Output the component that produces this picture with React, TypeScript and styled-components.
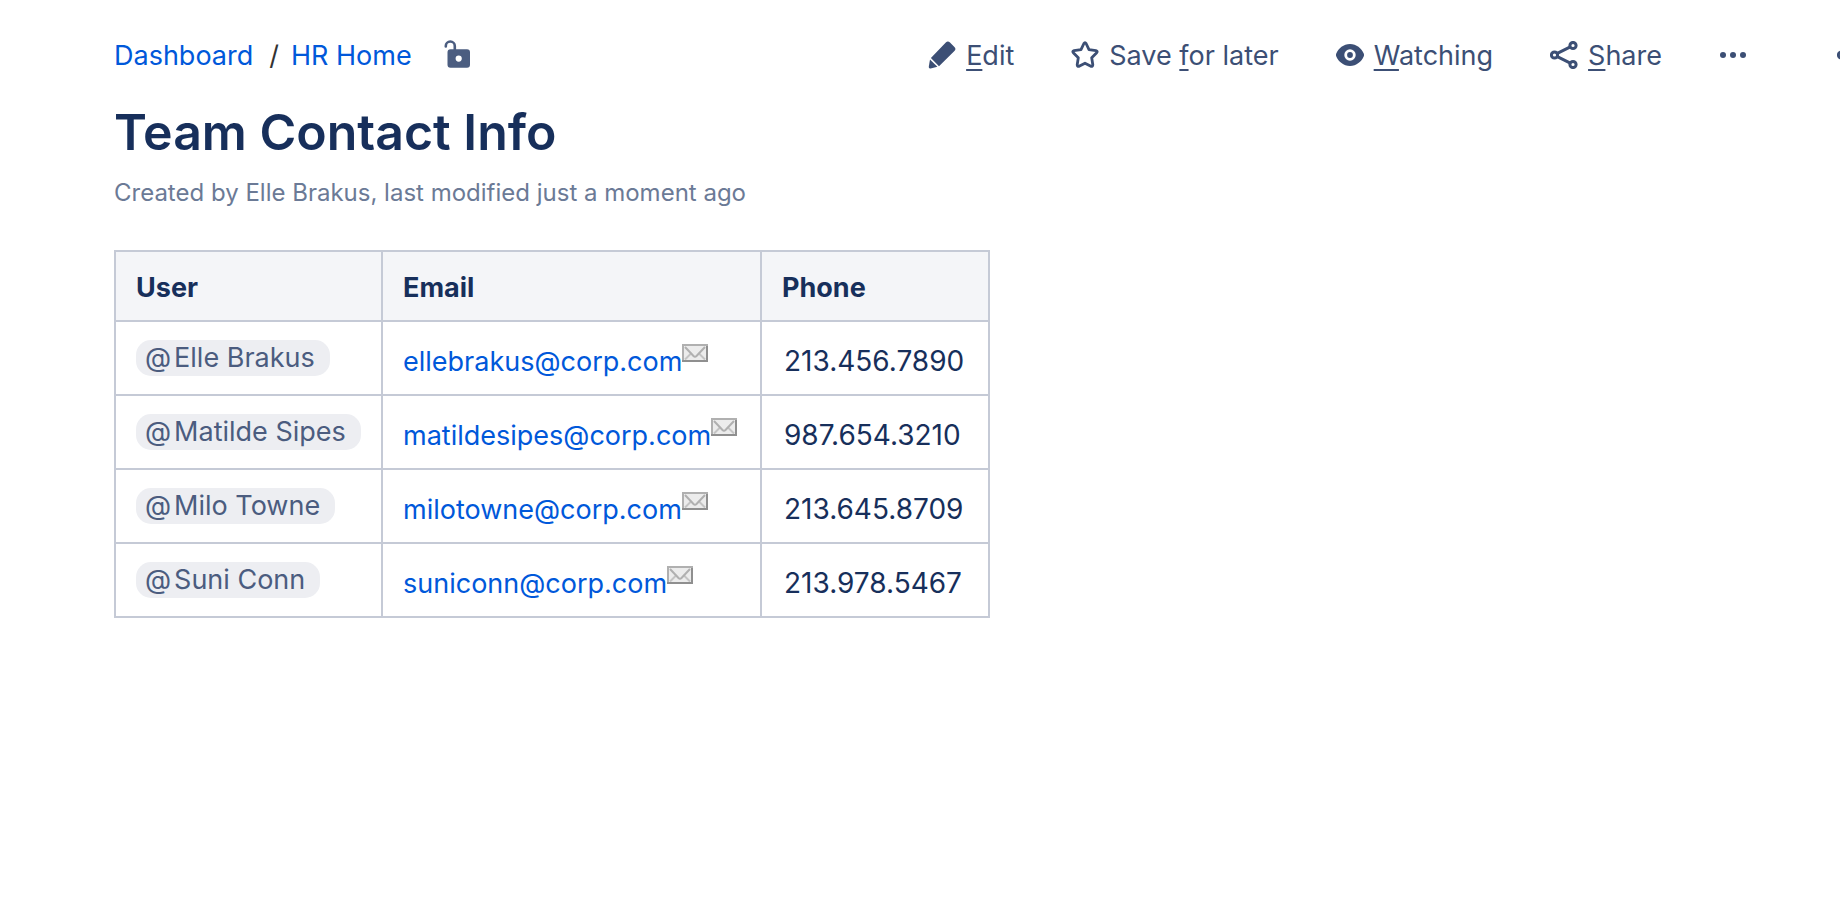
import React from "react";
import styled, { createGlobalStyle } from "styled-components";

const GlobalStyle = createGlobalStyle`
  *, *::before, *::after { box-sizing: border-box; }
  body {
    margin: 0;
    background: #ffffff;
    color: #172f5b;
    font-family: Inter, "Liberation Sans", sans-serif;
    font-size: 27px;
    line-height: 36px;
    overflow-x: hidden;
  }
`;

const Page = styled.div`
  padding-left: 114px;
  overflow: hidden;
`;

const Header = styled.header`
  display: flex;
  align-items: center;
  justify-content: space-between;
  padding-top: 38px;
`;

const Crumbs = styled.nav`
  display: flex;
  align-items: center;
  white-space: nowrap;
`;

const Separator = styled.span`
  margin: 0 12px 0 16px;
  color: #333333;
`;

const Link = styled.a`
  color: #0058da;
  text-decoration: none;
`;

const IconButton = styled.button`
  display: flex;
  align-items: center;
  border: 0;
  padding: 0;
  background: none;
  color: #4b5d80;
`;

const LockButton = styled(IconButton)`
  margin: 0 0 4px 32px;
`;

const Toolbar = styled.div`
  display: flex;
  align-items: center;
  gap: 57px;
  flex-shrink: 0;
`;

const Action = styled(IconButton)`
  gap: 10px;
  color: #3c4f75;
  font: inherit;
  white-space: nowrap;

  svg {
    margin-bottom: 2px;
  }
`;

const EdgeAction = styled(Action)`
  margin-left: 33px;
  margin-right: -25px;
`;

const Key = styled.span`
  text-decoration: underline;
  text-decoration-thickness: 2px;
  text-underline-offset: 4px;
`;

const Title = styled.h1`
  margin: 26px 0 0;
  font-size: 50px;
  line-height: 64px;
  font-weight: 600;
`;

const Meta = styled.p`
  margin: 13px 0 0;
  color: #6b7a96;
  font-size: 24px;
  line-height: 32px;
`;

const Table = styled.table`
  margin-top: 41px;
  border-collapse: collapse;
`;

const HeadCell = styled.th<{ $width: number }>`
  width: ${(p) => p.$width}px;
  height: 70px;
  padding: 4px 20px 0;
  border: 2px solid #c5cad6;
  background: #f4f5f8;
  font-weight: 700;
  text-align: left;
`;

const Cell = styled.td`
  height: 74px;
  padding: 7px 20px 0;
  border: 2px solid #c5cad6;
  white-space: nowrap;
`;

const UserCell = styled(Cell)`
  padding-top: 0;
`;

const PhoneCell = styled(Cell)`
  padding: 6px 22px 0;
  font-size: 28px;
`;

const Mention = styled.a`
  display: inline-flex;
  gap: 3px;
  padding: 0 15px 0 9px;
  border-radius: 15px;
  background: #edeef2;
  color: #4b5c7f;
  text-decoration: none;
`;

const MailIcon = styled.svg`
  vertical-align: 9px;
`;

const icon = { width: 28, height: 28, viewBox: "0 0 28 28", "aria-hidden": true } as const;

const Unlock = () => (
  <svg {...icon}>
    <path d="M1.800 6.500V6a4.500 4.500 0 0 1 9 0v5" fill="none" stroke="currentColor" strokeWidth="2.600" strokeLinecap="round" />
    <path fillRule="evenodd" fill="currentColor" d="M6.500 9.300h16.500a3 3 0 0 1 3 3V24.800a3 3 0 0 1-3 3H6.500a3 3 0 0 1-3-3V12.300a3 3 0 0 1 3-3zM14.700 15.500a3.100 3.100 0 1 0 0 6.200 3.100 3.100 0 0 0 0-6.200z" />
  </svg>
);

const Pencil = () => (
  <svg {...icon} fill="currentColor">
    <path d="M17.800 1.600a3 3 0 0 1 4.200 0l4.400 4.300a3 3 0 0 1 0 4.200L11 25.300 2.900 17z" />
    <path d="M2 18.500L9.400 25.800 2.600 27.400Q.5 27.800.8 25.600z" />
  </svg>
);

const Star = () => (
  <svg {...icon} fill="none" stroke="currentColor" strokeWidth="2.800" strokeLinejoin="round">
    <path d="M12.900 2.500q1.100-1.800 2.200 0L18 8.600l7 1q2 .5.700 2.100l-5 5 1.100 7.100q0 2-1.900 1.500L14 22.200l-5.900 3.100q-1.900.5-1.900-1.500l1.100-7.100-5-5q-1.300-1.600.7-2.100l7-1z" />
  </svg>
);

const Eye = () => (
  <svg {...icon}>
    <path fillRule="evenodd" fill="currentColor" d="M14 3C20.500 3 25.500 7.500 27.600 12.200a4 4 0 0 1 0 3.600C25.500 20.500 20.500 25 14 25S2.500 20.500.4 15.800a4 4 0 0 1 0-3.600C2.500 7.500 7.500 3 14 3zm0 5.300a5.700 5.700 0 1 0 0 11.400 5.700 5.700 0 0 0 0-11.400z" />
    <circle cx="14" cy="14" r="2.900" fill="currentColor" />
  </svg>
);

const ShareIcon = () => (
  <svg {...icon} fill="none" stroke="currentColor" strokeWidth="3">
    <circle cx="4.500" cy="14" r="3.100" />
    <circle cx="23" cy="4.500" r="3.100" />
    <circle cx="23" cy="23.500" r="3.100" />
    <path d="M7.300 12.400L20.300 5.800M7.300 15.600L20.300 22.100" />
  </svg>
);

const Dots = () => (
  <svg {...icon} fill="currentColor">
    <circle cx="4" cy="14" r="3" />
    <circle cx="14" cy="14" r="3" />
    <circle cx="24" cy="14" r="3" />
  </svg>
);

const Mail = () => (
  <MailIcon width="26" height="18" viewBox="0 0 26 18" aria-hidden="true">
    <rect x="1" y="1" width="24" height="16" fill="#ececec" stroke="#b0b0b0" strokeWidth="2" />
    <path d="M3 15.500L9.500 9M23 15.500L16.500 9" stroke="#c4c4c4" strokeWidth="2" />
    <path d="M3 3L11.500 12q1.500 1.500 3 0L23 3" fill="none" stroke="#b0b0b0" strokeWidth="2" />
    <path d="M0 17h26M25 2v16" stroke="#8f8f8f" strokeWidth="2" />
  </MailIcon>
);

const people = [
  { name: "Elle Brakus", email: "ellebrakus@corp.com", phone: "213.456.7890" },
  { name: "Matilde Sipes", email: "matildesipes@corp.com", phone: "987.654.3210" },
  { name: "Milo Towne", email: "milotowne@corp.com", phone: "213.645.8709" },
  { name: "Suni Conn", email: "suniconn@corp.com", phone: "213.978.5467" },
];

export default function App() {
  return (
    <Page>
      <GlobalStyle />
      <Header>
        <Crumbs aria-label="Breadcrumbs">
          <Link href="#dashboard">Dashboard</Link>
          <Separator>/</Separator>
          <Link href="#hr-home">HR Home</Link>
          <LockButton type="button" aria-label="Restrictions"><Unlock /></LockButton>
        </Crumbs>
        <Toolbar>
          <Action type="button"><Pencil /><span><Key>E</Key>dit</span></Action>
          <Action type="button"><Star /><span>Save <Key>f</Key>or later</span></Action>
          <Action type="button"><Eye /><span><Key>W</Key>atching</span></Action>
          <Action type="button"><ShareIcon /><span><Key>S</Key>hare</span></Action>
          <Action type="button" aria-label="More actions"><Dots /></Action>
          <EdgeAction type="button" aria-label="Related"><ShareIcon /></EdgeAction>
        </Toolbar>
      </Header>
      <main>
        <Title>Team Contact Info</Title>
        <Meta>Created by Elle Brakus, last modified just a moment ago</Meta>
        <Table>
          <thead>
            <tr>
              <HeadCell $width={267}>User</HeadCell>
              <HeadCell $width={379}>Email</HeadCell>
              <HeadCell $width={228}>Phone</HeadCell>
            </tr>
          </thead>
          <tbody>
            {people.map((p) => (
              <tr key={p.name}>
                <UserCell>
                  <Mention href="#profile"><span>@</span><span>{p.name}</span></Mention>
                </UserCell>
                <Cell><Link href={`mailto:${p.email}`}>{p.email}<Mail /></Link></Cell>
                <PhoneCell>{p.phone}</PhoneCell>
              </tr>
            ))}
          </tbody>
        </Table>
      </main>
    </Page>
  );
}
